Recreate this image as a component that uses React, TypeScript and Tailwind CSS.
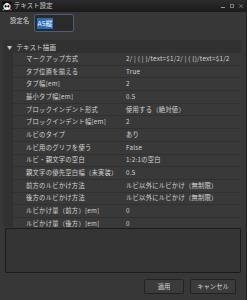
import React from 'react';

const rows: [string, string][] = [
  ['マークアップ方式', '2/ | ( | )/text=$1/2/ | ( {)/text=$1/2'],
  ['タブ位置を揃える', 'True'],
  ['タブ幅[em]', '2'],
  ['最小タブ幅[em]', '0.5'],
  ['ブロックインデント形式', '使用する（絶対値）'],
  ['ブロックインデント幅[em]', '2'],
  ['ルビのタイプ', 'あり'],
  ['ルビ用のグリフを使う', 'False'],
  ['ルビ・親文字の空白', '1:2:1の空白'],
  ['親文字の優先空白幅（未実装）', '0.5'],
  ['前方のルビかけ方法', 'ルビ以外にルビかけ（無制限）'],
  ['後方のルビかけ方法', 'ルビ以外にルビかけ（無制限）'],
  ['ルビかけ量（前方）[em]', '0'],
  ['ルビかけ量（後方）[em]', '0'],
];

const AppIcon = () => (
  <svg width="10" height="10" viewBox="0 0 10 10">
    <rect x="0" y="0" width="10" height="10" fill="#1a1a1a" />
    <circle cx="5" cy="5.5" r="3.6" fill="#f2f2f2" />
    <circle cx="1.8" cy="2" r="1.6" fill="#111" />
    <circle cx="8.2" cy="2" r="1.6" fill="#111" />
    <ellipse cx="3.6" cy="5.2" rx="1" ry="1.2" fill="#111" />
    <ellipse cx="6.4" cy="5.2" rx="1" ry="1.2" fill="#111" />
    <rect x="0.5" y="8" width="2" height="1.5" fill="#4caf50" />
    <rect x="7.5" y="8" width="2" height="1.5" fill="#e53935" />
  </svg>
);

const App = () => {
  return (
    <div
      className="w-[247px] h-[300px] overflow-hidden flex flex-col bg-[#373737] text-[#d4d4d4] border-r border-[#1e1e1e]"
      style={{ fontFamily: '"Noto Sans CJK JP", "Noto Sans", sans-serif' }}
    >
      {/* Title bar */}
      <div className="h-[12px] shrink-0 flex items-center bg-gradient-to-b from-[#2c2c2c] to-[#1a1a1a] pl-[2px] pr-[3px]">
        <AppIcon />
        <span className="ml-[2px] text-[6.3px] leading-[10px] text-[#cfcfcf] tracking-[0.2px]">テキスト設定</span>
        <div className="ml-auto flex items-center gap-[5px]">
          <div className="w-[4px] h-[1px] bg-[#9a9a9a] mt-[3px]" />
          <div className="w-[4px] h-[4px] border border-[#7a7a7a]" />
          <div className="w-[4px] h-[4px] text-[6px] leading-[4px] text-[#b0b0b0] flex items-center justify-center">×</div>
        </div>
      </div>

      {/* Name field */}
      <div className="h-[28px] shrink-0 flex items-start pt-[2px]">
        <span className="ml-[10px] mt-[2px] text-[6.3px] leading-[10px] text-[#d8d8d8] tracking-[0.2px]">設定名</span>
        <div className="ml-[4px] w-[40px] h-[18px] rounded-[2px] border border-[#4b5d78] bg-[#2a2a2a] flex items-center pl-[2px]">
          <span className="bg-[#2e6bb5] text-white text-[6.8px] leading-[11px] px-[1px]">A5縦</span>
        </div>
      </div>

      {/* Tree */}
      <div className="ml-[3px] w-[238px] h-[187px] shrink-0 overflow-hidden bg-[#313131]">
        <div className="h-[13px] flex items-center text-[6.5px] leading-[12px] tracking-[0.2px]">
          <span className="ml-[4px] text-[5px] text-[#c8c8c8]">▼</span>
          <span className="ml-[4px] text-[#d6d6d6]">テキスト描画</span>
        </div>
        {rows.map(([key, value]) => (
          <div
            key={key}
            className="ml-[10px] h-[12.7px] flex items-center bg-[#393939] border-b border-[#303030] text-[6.3px] leading-[12px] whitespace-nowrap tracking-[0.25px]"
          >
            <span className="w-[110px] shrink-0 pl-[13px]">{key}</span>
            <span className="pl-[3px]">{value}</span>
          </div>
        ))}
      </div>

      {/* Text area */}
      <div className="mt-[1px] ml-[5px] w-[236px] h-[45px] shrink-0 rounded-[1px] border border-[#1c1c1c] bg-[#343434]" />

      {/* Buttons */}
      <div className="mt-[6px] flex justify-end gap-[6px] pr-[10px]">
        <button className="w-[40px] h-[15px] rounded-[2px] border border-[#222] bg-[#3b3b3b] text-[6.3px] leading-[10px] text-[#d8d8d8]">
          適用
        </button>
        <button className="w-[46px] h-[15px] rounded-[2px] border border-[#222] bg-[#3b3b3b] text-[6.3px] leading-[10px] text-[#d8d8d8]">
          キャンセル
        </button>
      </div>
    </div>
  );
};

export default App;
